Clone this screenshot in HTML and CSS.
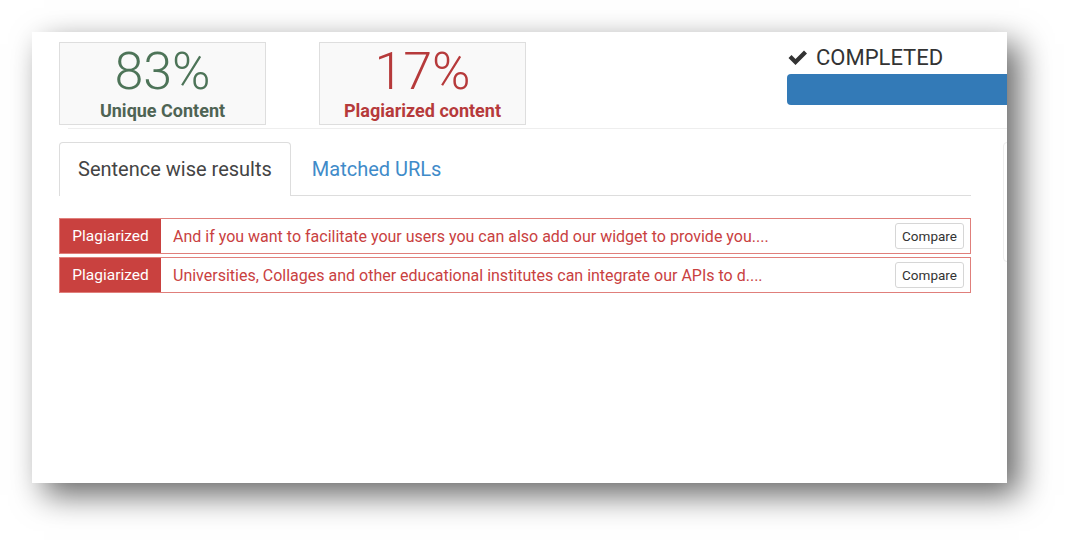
FILE: index.html
```html
<!DOCTYPE html>
<html lang="en">
<head>
  <meta charset="UTF-8">
  <title>Plagiarism Report</title>
  <link rel="stylesheet" href="styles.css">
</head>
<body>
  <div class="card">
    <div class="stats">
      <div class="stat-box unique">
        <div class="stat-num">83%</div>
        <div class="stat-label">Unique Content</div>
      </div>
      <div class="stat-box plag">
        <div class="stat-num">17%</div>
        <div class="stat-label">Plagiarized content</div>
      </div>
      <div class="status">
        <div class="status-text">
          <svg class="check" viewBox="0 0 20 16" width="20" height="16">
            <path d="M0.5 8 L3.5 5 L7.5 9 L16 0.5 L19 3.5 L7.5 15 Z" fill="#333"/>
          </svg>
          COMPLETED
        </div>
        <div class="progress"></div>
      </div>
    </div>
    <div class="divider"></div>

    <div class="content">
      <div class="results">
        <div class="tabs">
          <div class="tab active">Sentence wise results</div>
          <div class="tab">Matched URLs</div>
        </div>

        <div class="rows">
          <div class="row">
            <span class="badge">Plagiarized</span>
            <span class="sentence">And if you want to facilitate your users you can also add our widget to provide you....</span>
            <button class="compare">Compare</button>
          </div>
          <div class="row">
            <span class="badge">Plagiarized</span>
            <span class="sentence">Universities, Collages and other educational institutes can integrate our APIs to d....</span>
            <button class="compare">Compare</button>
          </div>
        </div>
      </div>
      <div class="side-panel"></div>
    </div>
  </div>
</body>
</html>
```

FILE: styles.css
```css
html, body {
  min-height: 548px;
}

body {
  margin: 0;
  background: #fff;
  font-family: Roboto, "Liberation Sans", sans-serif;
}

.card {
  margin: 32px 0 0 32px;
  width: 975px;
  height: 451px;
  background: #fff;
  overflow: hidden;
  box-shadow: 12px 12px 30px rgba(0, 0, 0, 0.6);
}

.stats {
  display: flex;
  padding: 10px 0 0 27px;
  height: 86px;
  box-sizing: border-box;
}

.stat-box {
  flex-shrink: 0;
  width: 207px;
  height: 83px;
  box-sizing: border-box;
  border: 1px solid #dedede;
  background: #f9f9f9;
  text-align: center;
}

.stat-box + .stat-box {
  margin-left: 53px;
}

.stat-num {
  font-size: 52px;
  font-weight: 300;
  line-height: 54px;
  margin-top: 2px;
}

.stat-label {
  font-size: 18px;
  font-weight: 700;
  line-height: 20px;
  margin-top: 2px;
}

.unique .stat-num { color: #4d7458; }
.unique .stat-label { color: #4f6454; }
.plag .stat-num { color: #b63a3b; }
.plag .stat-label { color: #b63a3b; }

.status {
  flex-shrink: 0;
  margin-left: 261px;
  padding-top: 3px;
}

.status-text {
  display: flex;
  align-items: center;
  gap: 8px;
  font-size: 22px;
  color: #333;
  line-height: 26px;
  padding-left: 1px;
}

.progress {
  margin-top: 3px;
  width: 260px;
  height: 31px;
  background: #337ab7;
  border-radius: 4px;
}

.divider {
  margin: 10px 0 0 36px;
  border-top: 1px solid #eeeeee;
}

.content {
  display: flex;
  padding-top: 13px;
}

.results {
  flex-shrink: 0;
  margin-left: 27px;
  width: 912px;
}

.tabs {
  display: flex;
  border-bottom: 1px solid #dddddd;
  height: 53px;
}

.tab {
  padding: 0 18px;
  font-size: 20px;
  line-height: 53px;
  color: #3f8bc9;
  border: 1px solid transparent;
  border-bottom: none;
  border-radius: 4px 4px 0 0;
}

.tab + .tab {
  margin-left: 2px;
}

.tab.active {
  color: #444;
  border-color: #dddddd;
  background: #fff;
  height: 54px;
  box-sizing: border-box;
}

.rows {
  margin-top: 22px;
  display: flex;
  flex-direction: column;
  gap: 3px;
}

.row {
  display: flex;
  align-items: center;
  height: 36px;
  box-sizing: border-box;
  border: 1px solid #e07f7b;
}

.badge {
  align-self: stretch;
  width: 101px;
  background: #c9413f;
  color: #fff;
  font-size: 15.5px;
  display: flex;
  align-items: center;
  justify-content: center;
}

.sentence {
  flex: 1;
  padding-left: 12px;
  color: #c9413f;
  font-size: 16px;
  white-space: nowrap;
}

.compare {
  margin-right: 6px;
  height: 26px;
  width: 69px;
  font-family: Roboto, "Liberation Sans", sans-serif;
  font-size: 13.5px;
  color: #333;
  background: #fff;
  border: 1px solid #d6d6d6;
  border-radius: 3px;
  padding: 0;
}

.side-panel {
  flex-shrink: 0;
  margin-left: 32px;
  width: 200px;
  height: 118px;
  border: 1px solid #eeeeee;
  border-radius: 4px;
}
```
